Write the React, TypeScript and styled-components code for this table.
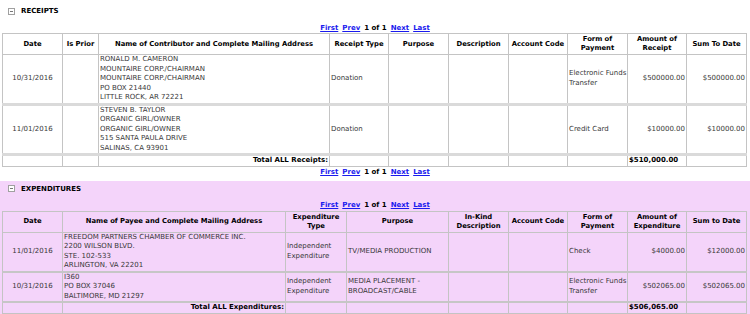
import { FC, ReactNode } from 'react';
import styled, { createGlobalStyle } from 'styled-components';

const GlobalStyle = createGlobalStyle`
    body {
        margin: 0;
        background: #fff;
        font-family: 'DejaVu Sans', Verdana, sans-serif;
        color: #000;
        -webkit-font-smoothing: antialiased;
    }
`;

type Row = {
    date: string;
    lines: string[];
    type: string[];
    purpose: string[];
    payment: string[];
    amount: string;
    sum: string;
};

const receipts: Row[] = [
    {
        date: '10/31/2016',
        lines: [
            'RONALD M. CAMERON',
            'MOUNTAIRE CORP./CHAIRMAN',
            'MOUNTAIRE CORP./CHAIRMAN',
            'PO BOX 21440',
            'LITTLE ROCK, AR 72221',
        ],
        type: ['Donation'],
        purpose: [],
        payment: ['Electronic Funds', 'Transfer'],
        amount: '$500000.00',
        sum: '$500000.00',
    },
    {
        date: '11/01/2016',
        lines: [
            'STEVEN B. TAYLOR',
            'ORGANIC GIRL/OWNER',
            'ORGANIC GIRL/OWNER',
            '515 SANTA PAULA DRIVE',
            'SALINAS, CA 93901',
        ],
        type: ['Donation'],
        purpose: [],
        payment: ['Credit Card'],
        amount: '$10000.00',
        sum: '$10000.00',
    },
];

const expenditures: Row[] = [
    {
        date: '11/01/2016',
        lines: [
            'FREEDOM PARTNERS CHAMBER OF COMMERCE INC.',
            '2200 WILSON BLVD.',
            'STE. 102-533',
            'ARLINGTON, VA 22201',
        ],
        type: ['Independent', 'Expenditure'],
        purpose: ['TV/MEDIA PRODUCTION'],
        payment: ['Check'],
        amount: '$4000.00',
        sum: '$12000.00',
    },
    {
        date: '10/31/2016',
        lines: ['I360', 'PO BOX 37046', 'BALTIMORE, MD 21297'],
        type: ['Independent', 'Expenditure'],
        purpose: ['MEDIA PLACEMENT -', 'BROADCAST/CABLE'],
        payment: ['Electronic Funds', 'Transfer'],
        amount: '$502065.00',
        sum: '$502065.00',
    },
];

const Lines: FC<{ items: string[] }> = ({ items }) => (
    <>
        {items.map((l, i) => (
            <Line key={i}>{l}</Line>
        ))}
    </>
);

// header text, "|" marks a line break
const H: FC<{ children: string }> = ({ children }) => {
    const out: ReactNode[] = [];
    children.split('|').forEach((p, i) => {
        if (i) out.push(<br key={'b' + i} />);
        out.push(p);
    });
    return <Th>{out}</Th>;
};

const Pager: FC = () => (
    <ScPager>
        <a href='#'>First</a>
        <a href='#'>Prev</a>
        <span>1 of 1</span>
        <a href='#'>Next</a>
        <a href='#'>Last</a>
    </ScPager>
);

const Toggle: FC = () => (
    <ScToggle>
        <svg width='7' height='7' viewBox='0 0 7 7'>
            <rect x='0.5' y='0.5' width='6' height='6' fill='#fff' stroke='#a0a0a0' />
            <line x1='2' y1='3.5' x2='5' y2='3.5' stroke='#777' />
        </svg>
    </ScToggle>
);

const receiptCols = [60, 36, 231, 59, 60, 60, 59, 60, 59, 60];
const expenseCols = [60, 223, 61, 102, 60, 59, 60, 59, 60];

export default function App() {
    return (
        <>
            <GlobalStyle />
            <Section>
                <Title>
                    <Toggle />
                    RECEIPTS
                </Title>
                <Pager />
                <Table $double>
                    <colgroup>
                        {receiptCols.map((w, i) => (
                            <Col key={i} $w={w} />
                        ))}
                    </colgroup>
                    <thead>
                        <tr>
                            <H>Date</H>
                            <H>Is Prior</H>
                            <H>Name of Contributor and Complete Mailing Address</H>
                            <H>Receipt Type</H>
                            <H>Purpose</H>
                            <H>Description</H>
                            <H>Account Code</H>
                            <H>Form of|Payment</H>
                            <H>Amount of|Receipt</H>
                            <H>Sum To Date</H>
                        </tr>
                    </thead>
                    <tbody>
                        {receipts.map((r, i) => (
                            <tr key={i}>
                                <Td $align='center'>{r.date}</Td>
                                <Td />
                                <Td><Lines items={r.lines} /></Td>
                                <Td><Lines items={r.type} /></Td>
                                <Td />
                                <Td />
                                <Td />
                                <Td><Lines items={r.payment} /></Td>
                                <Td $align='right'>{r.amount}</Td>
                                <Td $align='right'>{r.sum}</Td>
                            </tr>
                        ))}
                        <TotalRow>
                            <Td />
                            <Td />
                            <Td $align='right' $bold>Total ALL Receipts:</Td>
                            <Td />
                            <Td />
                            <Td />
                            <Td />
                            <Td />
                            <Td $bold>$510,000.00</Td>
                            <Td />
                        </TotalRow>
                    </tbody>
                </Table>
                <Pager />
            </Section>
            <Section $pink>
                <Title>
                    <Toggle />
                    EXPENDITURES
                </Title>
                <Pager />
                <Table>
                    <colgroup>
                        {expenseCols.map((w, i) => (
                            <Col key={i} $w={w} />
                        ))}
                    </colgroup>
                    <thead>
                        <tr>
                            <H>Date</H>
                            <H>Name of Payee and Complete Mailing Address</H>
                            <H>Expenditure|Type</H>
                            <H>Purpose</H>
                            <H>In-Kind|Description</H>
                            <H>Account Code</H>
                            <H>Form of|Payment</H>
                            <H>Amount of|Expenditure</H>
                            <H>Sum to Date</H>
                        </tr>
                    </thead>
                    <tbody>
                        {expenditures.map((r, i) => (
                            <tr key={i}>
                                <Td $align='center'>{r.date}</Td>
                                <Td><Lines items={r.lines} /></Td>
                                <Td><Lines items={r.type} /></Td>
                                <Td><Lines items={r.purpose} /></Td>
                                <Td />
                                <Td />
                                <Td><Lines items={r.payment} /></Td>
                                <Td $align='right'>{r.amount}</Td>
                                <Td $align='right'>{r.sum}</Td>
                            </tr>
                        ))}
                        <TotalRow>
                            <Td />
                            <Td $align='right' $bold>Total ALL Expenditures:</Td>
                            <Td />
                            <Td />
                            <Td />
                            <Td />
                            <Td />
                            <Td $bold>$506,065.00</Td>
                            <Td />
                        </TotalRow>
                    </tbody>
                </Table>
            </Section>
        </>
    );
}

const Section = styled.section<{ $pink?: boolean }>`
    background: ${(p) => (p.$pink ? '#f4d4fa' : '#fff')};
    padding-top: ${(p) => (p.$pink ? '0' : '3px')};
    padding-bottom: 3px;
`;

const Title = styled.div`
    display: flex;
    align-items: center;
    gap: 6px;
    padding-left: 8px;
    height: 16px;
    margin-bottom: 3px;
    font-size: 7px;
    font-weight: 700;
`;

const ScToggle = styled.span`
    display: inline-flex;
    width: 7px;
    height: 7px;
`;

const ScPager = styled.div`
    display: flex;
    justify-content: center;
    align-items: center;
    gap: 4px;
    height: 11px;
    font-size: 7px;
    font-weight: 700;

    a {
        color: #1a1aee;
        text-decoration: underline;
    }
`;

const Table = styled.table<{ $double?: boolean }>`
    table-layout: fixed;
    width: 744px;
    margin-left: 2px;
    border-collapse: collapse;
    border: 1px solid #a8a8a8;
    font-size: 7px;
    line-height: 9.5px;

    tbody tr:not(:last-child) td {
        border-bottom: ${(p) => (p.$double ? '3px solid #dadada' : '2px solid #c6c6c6')};
    }
`;

const Col = styled.col<{ $w: number }>`
    width: ${(p) => p.$w}px;
`;

const Th = styled.th`
    border: 1px solid #c4c4c4;
    padding: 1px;
    height: 18px;
    font-size: 6.8px;
    line-height: 9px;
    font-weight: 700;
    text-align: center;
    vertical-align: middle;
    white-space: nowrap;
`;

const Td = styled.td<{ $align?: 'left' | 'center' | 'right'; $bold?: boolean }>`
    border: 1px solid #c4c4c4;
    padding: 0 1px;
    color: ${(p) => (p.$bold ? '#000' : '#383838')};
    font-weight: ${(p) => (p.$bold ? 700 : 400)};
    font-size: 7px;
    text-align: ${(p) => p.$align ?? 'left'};
    vertical-align: middle;
    white-space: nowrap;
`;

const Line = styled.div`
    color: #383838;
`;

const TotalRow = styled.tr`
    height: 11px;
`;
